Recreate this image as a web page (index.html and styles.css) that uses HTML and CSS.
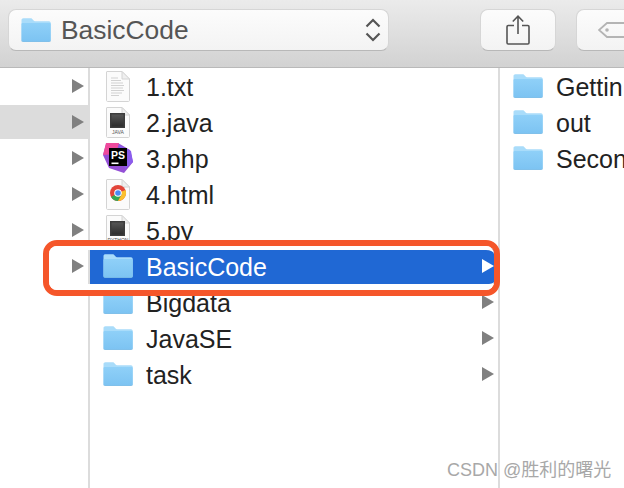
FILE: index.html
```html
<!DOCTYPE html>
<html lang="en">
<head>
<meta charset="utf-8">
<title>BasicCode</title>
<link rel="stylesheet" href="styles.css">
</head>
<body>
<svg class="defs" width="0" height="0" aria-hidden="true">
  <defs>
    <linearGradient id="fb" x1="0" y1="0" x2="0" y2="1">
      <stop offset="0" stop-color="#8fd0f8"/>
      <stop offset="1" stop-color="#7cc3f2"/>
    </linearGradient>
    <linearGradient id="scr" x1="0" y1="0" x2="0" y2="1">
      <stop offset="0" stop-color="#555"/>
      <stop offset="1" stop-color="#2c2c2c"/>
    </linearGradient>
    <symbol id="folder" viewBox="0 0 30 24">
      <path d="M0.5 2.2C0.5 1 1.3 0.3 2.4 0.3H9.6C10.6 0.3 11 0.7 11.7 1.5L12.6 2.6C13 3 13.4 3.2 14 3.2H28C29 3.2 29.7 3.9 29.7 5V22C29.7 23.1 29 23.7 28 23.7H2.2C1.2 23.7 0.5 23.1 0.5 22Z" fill="#a9dcfa"/>
      <path d="M0.5 6.2C0.5 5.4 1 5 1.8 5H28.4C29.2 5 29.7 5.4 29.7 6.2V22C29.7 23.1 29 23.7 28 23.7H2.2C1.2 23.7 0.5 23.1 0.5 22Z" fill="url(#fb)"/>
      <path d="M0.5 22C0.5 23.1 1.2 23.7 2.2 23.7H28C29 23.7 29.7 23.1 29.7 22V22.8C29.7 23.4 29 24 28 24H2.2C1.2 24 0.5 23.4 0.5 22.8Z" fill="#5b9ecb"/>
    </symbol>
    <symbol id="page" viewBox="0 0 24 31">
      <path d="M1 .5H16L23.5 8V29.5C23.5 30 23 30.5 22.5 30.5H1.5C1 30.5 .5 30 .5 29.5V1C.5 .7 .7 .5 1 .5Z" fill="#fbfbfb" stroke="#d4d4d4"/>
      <path d="M16 .5V8H23.5Z" fill="#efefef" stroke="#d4d4d4"/>
    </symbol>
  </defs>
</svg>

<header class="toolbar">
  <div class="path-control">
    <svg class="folder" width="30" height="24"><use href="#folder"/></svg>
    <span class="path-name">BasicCode</span>
    <svg class="chevrons" width="16" height="24" viewBox="0 0 16 24"><path d="M1.500 8.500L8 2L14.500 8.500M1.500 15.500L8 22L14.500 15.500" fill="none" stroke="#555" stroke-width="2.200"/></svg>
  </div>
  <div class="tool-button share">
    <svg width="24" height="30" viewBox="0 0 24 30"><path d="M8 10.500H2.200C1.500 10.500 1 11 1 11.700V27.800C1 28.500 1.500 29 2.200 29H21.800C22.500 29 23 28.500 23 27.800V11.700C23 11 22.500 10.500 21.800 10.500H16" fill="none" stroke="#555" stroke-width="1.600"/><path d="M12 19V1.500M6.800 6.500L12 1.200L17.200 6.500" fill="none" stroke="#555" stroke-width="1.600"/></svg>
  </div>
  <div class="tool-button tag">
    <svg width="40" height="16" viewBox="0 0 40 16"><path d="M40 1H9L1 8L9 15H40" fill="none" stroke="#b4b4b4" stroke-width="1.800"/><circle cx="9" cy="8" r="1.800" fill="#b4b4b4"/></svg>
  </div>
</header>

<main class="browser">
  <section class="col col-one">
    <div class="row"><i class="arrow"></i></div>
    <div class="row row-muted"><i class="arrow"></i></div>
    <div class="row"><i class="arrow"></i></div>
    <div class="row"><i class="arrow"></i></div>
    <div class="row"><i class="arrow"></i></div>
    <div class="row"><i class="arrow"></i></div>
  </section>
  <section class="col col-two">
    <div class="row">
      <span class="icon"><svg width="24" height="31"><use href="#page"/>
        <path d="M5 7h7M5 9.500h10M5 12h12M5 14.500h13M5 17h12M5 19.500h13M5 22h11M5 24.500h8" stroke="#c8c8c8" stroke-width=".8"/></svg></span>
      <span class="name">1.txt</span>
    </div>
    <div class="row">
      <span class="icon"><svg width="24" height="31"><use href="#page"/>
        <rect x="4" y="6" width="15" height="15" fill="#3c3c3c"/><rect x="5.500" y="7.500" width="12" height="12" fill="url(#scr)"/></svg><b class="badge">JAVA</b></span>
      <span class="name">2.java</span>
    </div>
    <div class="row">
      <span class="icon"><svg width="30" height="32" viewBox="0 0 30 32">
        <path d="M3 2L15 1L27 8L30 20L21 31L6 26L0 13Z" fill="#9450d6"/>
        <path d="M3 1L16 1L13 12L0 13Z" fill="#ee4a9c"/>
        <path d="M16 3L28 9L30 20L22 27Z" fill="#8a5cec"/>
        <rect x="6" y="6" width="18" height="18" fill="#000"/>
        <rect x="8.500" y="20.500" width="7" height="1.600" fill="#fff"/>
      </svg><b class="ps">PS</b></span>
      <span class="name">3.php</span>
    </div>
    <div class="row">
      <span class="icon"><svg width="24" height="31"><use href="#page"/>
        <circle cx="12" cy="14" r="8" fill="#e2453a"/>
        <path d="M12 14L5.070 18A8 8 0 0 0 12 22L16 15Z" fill="#34a853"/>
        <path d="M12 14L16 15L12 22A8 8 0 0 0 19.500 11Z" fill="#fbc02d"/>
        <circle cx="12" cy="14" r="3.800" fill="#fff"/><circle cx="12" cy="14" r="2.800" fill="#4a8af4"/></svg></span>
      <span class="name">4.html</span>
    </div>
    <div class="row">
      <span class="icon"><svg width="24" height="31"><use href="#page"/>
        <rect x="4" y="6" width="15" height="15" fill="#3c3c3c"/><rect x="5.500" y="7.500" width="12" height="12" fill="url(#scr)"/></svg><b class="badge">PYTHON</b></span>
      <span class="name">5.py</span>
    </div>
    <div class="row row-active">
      <span class="icon"><svg width="30" height="24"><use href="#folder"/></svg></span>
      <span class="name">BasicCode</span>
      <i class="arrow"></i>
    </div>
    <div class="row">
      <span class="icon"><svg width="30" height="24"><use href="#folder"/></svg></span>
      <span class="name">Bigdata</span>
      <i class="arrow"></i>
    </div>
    <div class="row">
      <span class="icon"><svg width="30" height="24"><use href="#folder"/></svg></span>
      <span class="name">JavaSE</span>
      <i class="arrow"></i>
    </div>
    <div class="row">
      <span class="icon"><svg width="30" height="24"><use href="#folder"/></svg></span>
      <span class="name">task</span>
      <i class="arrow"></i>
    </div>
  </section>
  <section class="col col-three">
    <div class="row">
      <span class="icon"><svg width="30" height="24"><use href="#folder"/></svg></span>
      <span class="name">Gettin</span>
    </div>
    <div class="row">
      <span class="icon"><svg width="30" height="24"><use href="#folder"/></svg></span>
      <span class="name">out</span>
    </div>
    <div class="row">
      <span class="icon"><svg width="30" height="24"><use href="#folder"/></svg></span>
      <span class="name">Secon</span>
    </div>
  </section>
</main>

<div class="callout"><div class="callout-gap"></div></div>
<div class="watermark">CSDN @胜利的曙光</div>
</body>
</html>
```

FILE: styles.css
```css
* { box-sizing: border-box; }

html, body {
  margin: 0;
  padding: 0;
}

body {
  position: relative;
  width: 624px;
  height: 488px;
  overflow: hidden;
  background: #fff;
  color: #222;
  font-family: "Liberation Sans", Arial, sans-serif;
  display: flex;
  flex-direction: column;
}

.defs { position: absolute; }

.toolbar {
  flex: 0 0 68px;
  display: flex;
  gap: 20px;
  padding: 9px 0 0 8px;
  background: linear-gradient(#ebebeb, #d2d2d2);
  border-bottom: 1px solid #b9b9b9;
}

.path-control,
.tool-button {
  height: 42px;
  background: linear-gradient(#fcfcfc, #f3f3f3);
  border: 1px solid #d6d6d6;
  border-bottom-color: #b8b8b8;
  border-radius: 8px;
  flex-shrink: 0;
  display: flex;
  align-items: center;
}

.path-control {
  width: 381px;
  margin-right: 71px;
  padding: 0 7px 0 12px;
}

.path-name {
  flex: 1;
  margin-left: 10px;
  font-size: 26.400px;
  color: #555;
}

.tool-button { justify-content: center; }

.share { width: 76px; }
.share svg { margin-top: -1px; }

.tag {
  width: 100px;
  justify-content: flex-start;
  padding-left: 21px;
}

.browser {
  flex: 1;
  display: flex;
  min-height: 0;
}

.col {
  display: flex;
  flex-direction: column;
}

.col-one {
  flex: 0 0 90px;
  border-right: 2px solid #dcdcdc;
}

.col-two {
  flex: 0 0 410px;
  border-right: 2px solid #dcdcdc;
}

.col-three {
  flex: 1;
  min-width: 0;
  overflow: hidden;
}

.row {
  flex: 0 0 36px;
  display: flex;
  align-items: center;
}

.row-muted {
  background: linear-gradient(#fff 1px, #dcdcdc 1px, #dcdcdc 35px, #fff 35px);
}

.row-active {
  background: #2068d4;
  color: #fff;
}

.col-one .row {
  justify-content: flex-end;
  padding-right: 4px;
}

.col-two .row { padding-left: 13px; padding-right: 4px; }
.col-three .row { padding-left: 13px; }

.icon {
  position: relative;
  flex: 0 0 30px;
  display: flex;
  justify-content: center;
  align-items: center;
  height: 32px;
}

.icon svg { display: block; flex-shrink: 0; }

.badge {
  position: absolute;
  left: 0;
  right: 0;
  top: 23px;
  text-align: center;
  font-size: 5px;
  line-height: 6px;
  font-weight: 400;
  color: #555;
}

.ps {
  position: absolute;
  left: 8px;
  top: 8px;
  font-size: 10.500px;
  line-height: 11px;
  color: #fff;
}

.name {
  flex: 1;
  margin-left: 13px;
  padding-top: 3px;
  font-size: 25px;
  white-space: nowrap;
}

.arrow {
  display: block;
  flex: 0 0 12px;
  width: 12px;
  height: 14px;
  background: #808080;
  clip-path: polygon(0 0, 100% 50%, 0 100%);
}

.row-active .arrow { background: #fff; }

.callout {
  position: absolute;
  left: 43px;
  top: 240px;
  width: 457px;
  height: 56px;
  border: 6px solid #f5562a;
  border-radius: 14px;
}

.callout-gap {
  height: 100%;
  border-top: 4px solid #fff;
  border-bottom: 6px solid #fff;
  border-radius: 8px;
}

.watermark {
  position: absolute;
  left: 447px;
  top: 460px;
  font-size: 18px;
  line-height: 21px;
  color: #a8a8a8;
  font-family: "Liberation Sans", "Noto Sans CJK SC", sans-serif;
  white-space: nowrap;
}
```
